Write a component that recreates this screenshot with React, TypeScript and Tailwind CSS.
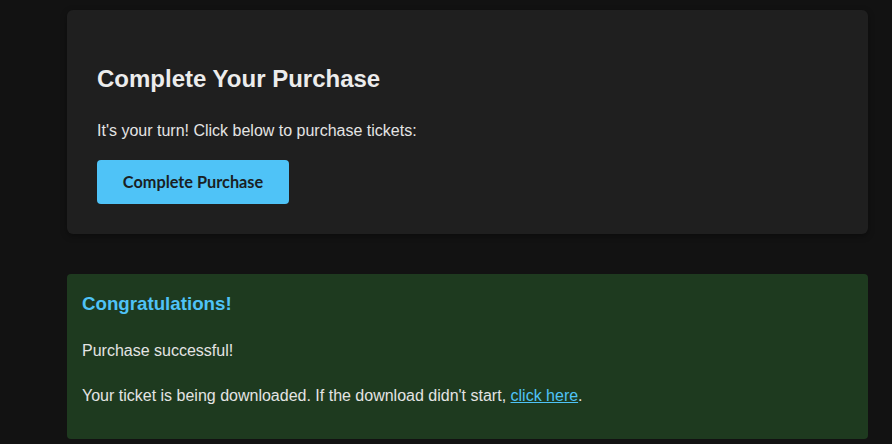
import React from "react";

export default function App() {
  return (
    <div className="min-h-screen bg-[#121212] pl-[67px] pr-[24px] pt-[10px] pb-[20px] font-['Liberation_Sans',Arial,sans-serif]">
      <div className="rounded-[6px] bg-[#1f1f1f] px-[30px] pt-[55px] pb-[30px] shadow-[0_2px_6px_rgba(0,0,0,0.35)]">
        <h2 className="text-[24px] leading-[27px] font-bold text-[#ececec]">Complete Your Purchase</h2>
        <p className="mt-[30px] text-[16px] leading-[18px] text-[#e4e4e4]">It's your turn! Click below to purchase tickets:</p>
        <button className="mt-[20px] flex h-[44px] w-[192px] items-center justify-center rounded-[4px] bg-[#4fc3f7] font-['Lato',sans-serif] text-[16.3px] font-bold text-[#1a1f24]">
          Complete Purchase
        </button>
      </div>
      <div className="mt-[40px] rounded-[4px] bg-[#1e3a1f] px-[15px] pt-[19px] pb-[34px]">
        <h3 className="text-[18.72px] leading-[22px] font-bold text-[#4fc3f7]">Congratulations!</h3>
        <p className="mt-[27px] text-[16px] leading-[18px] text-[#e4e4e4]">Purchase successful!</p>
        <p className="mt-[27px] text-[16px] leading-[18px] text-[#e4e4e4]">
          Your ticket is being downloaded. If the download didn't start,{" "}
          <a href="#" className="text-[#4fc3f7] underline">click here</a>.
        </p>
      </div>
    </div>
  );
}
